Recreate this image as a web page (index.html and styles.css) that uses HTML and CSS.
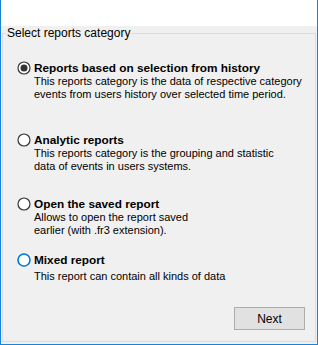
FILE: index.html
```html
<!DOCTYPE html>
<html lang="en">
<head>
    <meta charset="UTF-8">
    <title>Select reports category</title>
    <link rel="stylesheet" href="styles.css">
</head>
<body>
    <div class="window">
        <div class="header"></div>
        <div class="content">
            <fieldset class="group">
                <legend>Select reports category</legend>
                <div class="options">
                    <div class="option first">
                        <svg class="radio" width="14" height="14" viewBox="0 0 14 14">
                            <circle cx="7" cy="7" r="6" fill="#fff" stroke="#333" stroke-width="1.2"/>
                            <circle cx="7" cy="7" r="3.5" fill="#333"/>
                        </svg>
                        <div class="option-text">
                            <div class="title">Reports based on selection from history</div>
                            <div class="desc">This reports category is the data of respective category<br>events from users history over selected time period.</div>
                        </div>
                    </div>
                    <div class="option second">
                        <svg class="radio" width="14" height="14" viewBox="0 0 14 14">
                            <circle cx="7" cy="7" r="6" fill="#fff" stroke="#333" stroke-width="1.2"/>
                        </svg>
                        <div class="option-text">
                            <div class="title">Analytic reports</div>
                            <div class="desc">This reports category is the grouping and statistic<br>data of events in users systems.</div>
                        </div>
                    </div>
                    <div class="option third">
                        <svg class="radio" width="14" height="14" viewBox="0 0 14 14">
                            <circle cx="7" cy="7" r="6" fill="#fff" stroke="#333" stroke-width="1.2"/>
                        </svg>
                        <div class="option-text">
                            <div class="title">Open the saved report</div>
                            <div class="desc">Allows to open the report saved<br>earlier (with .fr3 extension).</div>
                        </div>
                    </div>
                    <div class="option fourth">
                        <svg class="radio" width="14" height="14" viewBox="0 0 14 14">
                            <circle cx="7" cy="7" r="6" fill="#fff" stroke="#0078d7" stroke-width="1.6"/>
                        </svg>
                        <div class="option-text">
                            <div class="title">Mixed report</div>
                            <div class="desc spaced">This report can contain all kinds of data</div>
                        </div>
                    </div>
                </div>
                <button class="next-btn">Next</button>
            </fieldset>
        </div>
    </div>
</body>
</html>
```

FILE: styles.css
```css
* {
    margin: 0;
    padding: 0;
    box-sizing: border-box;
}

body {
    font-family: 'Liberation Sans', Arial, sans-serif;
    font-size: 11px;
    color: #000;
    background: #fff;
}

.window {
    width: 318px;
    height: 345px;
    border: 1px solid #1883d7;
    border-top: none;
    display: flex;
    flex-direction: column;
}

.header {
    height: 26px;
    background: #fff;
}

.content {
    flex: 1;
    background: #f0f0f0;
    display: flex;
    padding: 0 1px 2px 1px;
}

.group {
    flex: 1;
    border: 1px solid #dcdcdc;
    display: flex;
    flex-direction: column;
    padding: 0;
    min-width: 0;
}

.group legend {
    font-size: 12px;
    margin-left: 3px;
    padding: 0 1px;
    line-height: 14px;
}

.options {
    flex: 1;
    display: flex;
    flex-direction: column;
    padding-left: 14px;
}

.option {
    display: flex;
    align-items: flex-start;
    gap: 3px;
    white-space: nowrap;
}

.option.first { margin-top: 21px; }
.option.second { margin-top: 32px; }
.option.third { margin-top: 24px; }
.option.fourth { margin-top: 16px; }

.radio {
    flex-shrink: 0;
    margin-top: 0;
}

.title {
    font-weight: bold;
    font-size: 11.8px;
    line-height: 14px;
}

.desc {
    line-height: 13px;
    font-size: 11px;
}

.desc.spaced {
    margin-top: 3px;
}

.next-btn {
    align-self: flex-end;
    width: 71px;
    height: 23px;
    margin: 0 10px 11px 0;
    background: #e1e1e1;
    border: 1px solid #adadad;
    font-family: 'Liberation Sans', Arial, sans-serif;
    font-size: 12px;
    color: #000;
}
```
